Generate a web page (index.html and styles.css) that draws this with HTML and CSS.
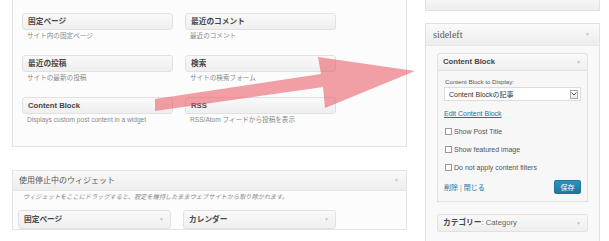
FILE: index.html
```html
<!DOCTYPE html>
<html>

<head>
    <meta charset="utf-8">
    <title>ウィジェット</title>
    <link rel="stylesheet" href="styles.css">
</head>

<body>
    <div class="page">
        <div class="main">
            <div class="holder">
                <div class="widget-grid">
                    <div class="widget">
                        <div class="widget-top">固定ページ</div>
                        <div class="widget-desc">サイト内の固定ページ</div>
                    </div>
                    <div class="widget">
                        <div class="widget-top">最近のコメント</div>
                        <div class="widget-desc">最近のコメント</div>
                    </div>
                    <div class="widget">
                        <div class="widget-top">最近の投稿</div>
                        <div class="widget-desc">サイトの最新の投稿</div>
                    </div>
                    <div class="widget">
                        <div class="widget-top">検索</div>
                        <div class="widget-desc">サイトの検索フォーム</div>
                    </div>
                    <div class="widget">
                        <div class="widget-top">Content Block</div>
                        <div class="widget-desc">Displays custom post content in a widget</div>
                    </div>
                    <div class="widget">
                        <div class="widget-top">RSS</div>
                        <div class="widget-desc">RSS/Atom フィードから投稿を表示</div>
                    </div>
                </div>
            </div>

            <div class="inactive">
                <div class="panel-head">
                    使用停止中のウィジェット
                    <span class="toggle">▼</span>
                </div>
                <p class="inactive-desc">ウィジェットをここにドラッグすると、設定を維持したままウェブサイトから取り除かれます。</p>
                <div class="inactive-grid">
                    <div class="widget-top">固定ページ<span class="toggle">▼</span></div>
                    <div class="widget-top">カレンダー<span class="toggle">▼</span></div>
                </div>
            </div>
        </div>

        <div class="side">
            <div class="sidebar-collapsed"></div>

            <div class="sidebar">
                <div class="sidebar-head">
                    sideleft
                    <span class="toggle">▼</span>
                </div>
                <div class="sidebar-body">
                    <div class="open-widget">
                        <div class="widget-top">Content Block<span class="toggle">▼</span></div>
                        <div class="widget-inside">
                            <div class="field-label">Content Block to Display:</div>
                            <div class="select">
                                <span>Content Blockの記事</span>
                                <span class="select-arrow">
                                    <svg width="6" height="4" viewBox="0 0 6 4"><path d="M0.5 0.5 L3 3 L5.5 0.5" fill="none" stroke="#555" stroke-width="1"/></svg>
                                </span>
                            </div>
                            <a class="edit-link" href="#">Edit Content Block</a>
                            <label class="check"><span class="box"></span>Show Post Title</label>
                            <label class="check"><span class="box"></span>Show featured image</label>
                            <label class="check"><span class="box"></span>Do not apply content filters</label>
                            <div class="actions">
                                <span class="links"><a href="#">削除</a> | <a href="#">閉じる</a></span>
                                <button class="save">保存</button>
                            </div>
                        </div>
                    </div>

                    <div class="widget-top category">カテゴリー<span class="in-title">: Category</span><span class="toggle">▼</span></div>
                </div>
            </div>
        </div>

        <svg class="arrow" width="609" height="241" viewBox="0 0 609 241">
            <polygon points="155,99 321,74 318,57 415,71 325,108 323,87 155,111" fill="#e85a66" fill-opacity="0.58"/>
        </svg>
    </div>
</body>
</html>
```

FILE: styles.css
```css
body {
    margin: 0;
    background: #ffffff;
    font-family: "Liberation Sans", "Noto Sans CJK JP", sans-serif;
    color: #333;
}

.page {
    position: relative;
    display: flex;
    width: 609px;
    height: 241px;
    overflow: hidden;
}

.main {
    margin-left: 12px;
    width: 395px;
}

.holder {
    box-sizing: border-box;
    border: 1px solid #e3e3e3;
    border-top: none;
    background: #fcfcfc;
    padding: 13px 0 21px 9px;
}

.widget-grid {
    display: grid;
    grid-template-columns: 151px 151px;
    column-gap: 12px;
    row-gap: 14px;
}

.widget-top {
    position: relative;
    box-sizing: border-box;
    height: 17px;
    line-height: 15px;
    padding: 0 5px;
    border: 1px solid #e1e1e1;
    border-radius: 3px;
    background: linear-gradient(#f9f9f9, #efefef);
    font-size: 7.7px;
    font-weight: bold;
    color: #464646;
}

.widget-desc {
    font-size: 6.6px;
    line-height: 10px;
    padding: 1px 5px 0;
    color: #8a8a8a;
}

.toggle {
    position: absolute;
    right: 6px;
    top: 0;
    font-size: 5px;
    font-weight: normal;
    color: #c4c4c4;
}

.inactive {
    margin-top: 23px;
    border: 1px solid #e3e3e3;
    background: #fcfcfc;
}

.panel-head {
    position: relative;
    height: 19px;
    line-height: 19px;
    padding-left: 6px;
    border-bottom: 1px solid #e6e6e6;
    background: linear-gradient(#fafafa, #ededed);
    font-size: 8px;
    color: #555;
}

.panel-head .toggle {
    right: 7px;
    line-height: 19px;
}

.inactive-desc {
    margin: 0;
    padding: 1px 0 0 10px;
    font-size: 6.2px;
    line-height: 9px;
    font-style: italic;
    color: #888;
}

.inactive-grid {
    display: grid;
    grid-template-columns: 153px 153px;
    column-gap: 12px;
    padding: 9px 0 0 5px;
}

.inactive-grid .widget-top {
    height: 19px;
    line-height: 17px;
}

.side {
    margin-left: 18px;
    width: 175px;
}

.sidebar-collapsed {
    height: 10px;
    border: 1px solid #e1e1e1;
    border-top: none;
    background: linear-gradient(#f6f6f6, #ededed);
}

.sidebar {
    margin-top: 12px;
    border: 1px solid #e1e1e1;
    background: #f9f9f9;
}

.sidebar-head {
    position: relative;
    height: 21px;
    line-height: 22px;
    padding-left: 7px;
    border-bottom: 1px solid #e6e6e6;
    background: linear-gradient(#fafafa, #ededed);
    font-family: "Liberation Serif", serif;
    font-size: 10px;
    color: #5a5a5a;
}

.sidebar-head .toggle {
    line-height: 21px;
    right: 9px;
}

.sidebar-body {
    padding: 7px 11px 40px 11px;
}

.open-widget .widget-top {
    height: 18px;
    line-height: 16px;
    border-radius: 3px 3px 0 0;
}

.widget-inside {
    border: 1px solid #e1e1e1;
    border-top: none;
    background: #f7f7f7;
    padding: 7px 6px 7px 6px;
    font-size: 7px;
    color: #555;
}

.field-label {
    font-size: 6.2px;
    line-height: 8px;
    padding-left: 1px;
}

.select {
    display: flex;
    justify-content: space-between;
    align-items: center;
    box-sizing: border-box;
    height: 14px;
    margin-top: 1px;
    padding: 0 2px 0 4px;
    border: 1px solid #dcdcdc;
    background: #fff;
    font-size: 7px;
    color: #333;
}

.select-arrow {
    display: flex;
    align-items: center;
    justify-content: center;
    box-sizing: border-box;
    width: 8px;
    height: 9px;
    border: 1px solid #aaa;
    background: linear-gradient(#fff, #eaeaea);
}

.edit-link {
    display: block;
    margin-top: 8px;
    font-size: 7px;
    line-height: 9px;
    color: #21759b;
}

.check {
    display: flex;
    align-items: center;
    margin-top: 8px;
    height: 10px;
    font-size: 7px;
    color: #555;
}

.check .box {
    box-sizing: border-box;
    width: 7px;
    height: 7px;
    margin: 0 2px 0 1px;
    border: 1px solid #999;
    background: #fff;
}

.actions {
    display: flex;
    justify-content: space-between;
    align-items: center;
    margin-top: 8px;
}

.links {
    font-size: 7px;
    color: #999;
}

.links a {
    color: #21759b;
    text-decoration: none;
}

.save {
    width: 27px;
    height: 14px;
    padding: 0;
    border: 1px solid #21759b;
    border-radius: 2px;
    background: linear-gradient(#2a95c5, #21759b);
    font-family: "Noto Sans CJK JP", sans-serif;
    font-size: 7px;
    color: #fff;
}

.category {
    margin-top: 12px;
    height: 18px;
    line-height: 16px;
}

.in-title {
    font-weight: normal;
    color: #666;
}

.arrow {
    position: absolute;
    left: 0;
    top: 0;
}
```
